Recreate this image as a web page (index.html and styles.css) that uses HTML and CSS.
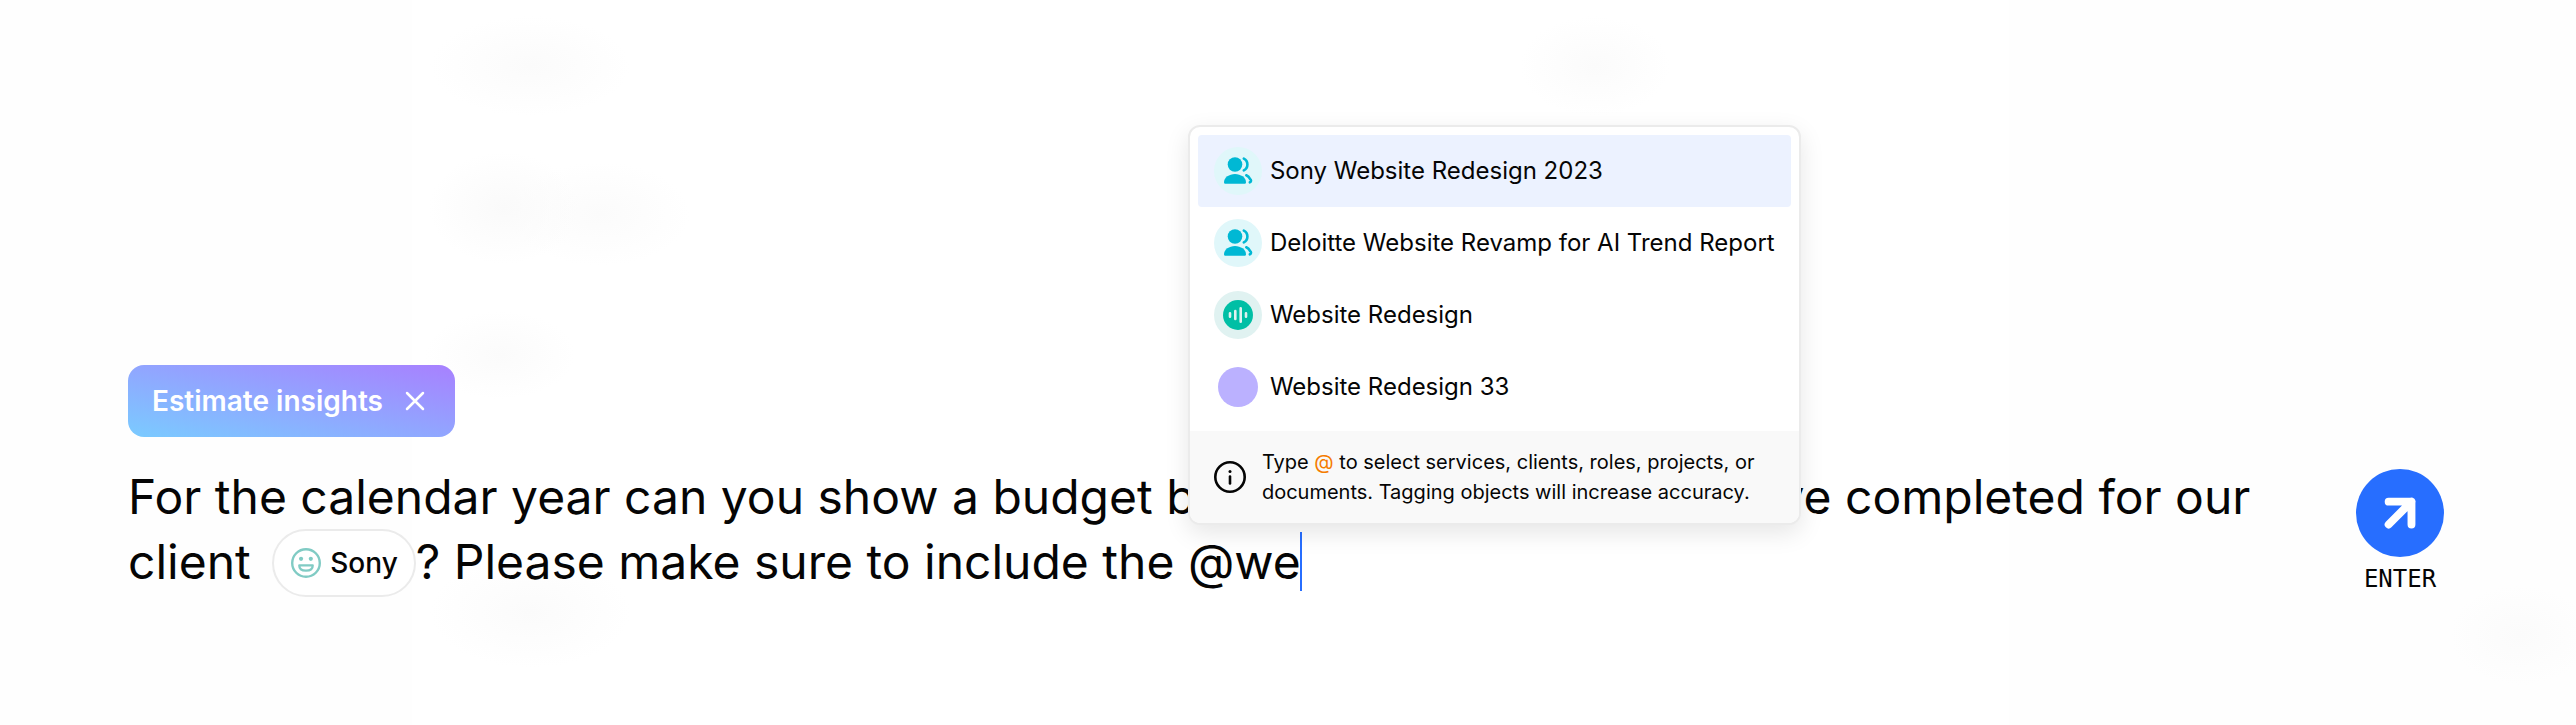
FILE: index.html
```html
<!DOCTYPE html>
<html lang="en">
<head>
<meta charset="utf-8">
<title>Estimate insights</title>
<link rel="stylesheet" href="styles.css">
</head>
<body>
<svg class="sprite" aria-hidden="true">
  <symbol id="people" viewBox="0 0 32 32">
    <circle cx="13" cy="9.5" r="7.3" fill="currentColor"/>
    <path d="M2 27.2c0-4.600 5.200-8.200 11-8.200s11 3.600 11 8.200c0 1-.7 1.600-1.700 1.600H3.700C2.700 28.800 2 28.200 2 27.200Z" fill="currentColor"/>
    <path d="M21.800 3.600c4.800 2.400 4.800 9.400 0 11.800M24.300 20.300c1.800.8 3 2 3.600 3.400m0 0c1.600 1.200 1.500 3-.1 3.600" fill="none" stroke="currentColor" stroke-width="2.600" stroke-linecap="round" stroke-linejoin="round"/>
  </symbol>
</svg>
<main class="page">
  <button class="tag" type="button">
    Estimate insights
    <svg class="tag-close" viewBox="0 0 32 32" aria-hidden="true"><path d="M8 8l16 16M24 8L8 24"/></svg>
  </button>
  <div class="composer">
    <div class="prompt" role="textbox" aria-multiline="true" aria-label="Prompt" tabindex="0">For the calendar year can you show a budget breakdown by projects we've completed for our client <span class="chip"><svg class="chip-icon" viewBox="0 0 24 24" aria-hidden="true"><circle cx="12" cy="12" r="9.200" fill="none" stroke="currentColor" stroke-width="1.600"/><circle cx="8.700" cy="9.200" r="1.400" fill="currentColor"/><circle cx="15.200" cy="9.200" r="1.400" fill="currentColor"/><path d="M7.500 13.600h9c0 2.300-1.900 3.500-4.500 3.500s-4.500-1.200-4.500-3.500Z" fill="none" stroke="currentColor" stroke-width="1.500" stroke-linejoin="round"/></svg>Sony</span>? Please make sure to include the <span class="mention">@we<span class="caret"></span>
      <span class="popup">
        <span class="options" role="listbox" aria-label="Suggestions">
          <button class="option selected" type="button" role="option" aria-selected="true"><span class="avatar cyan"><svg viewBox="0 0 32 32"><use href="#people"/></svg></span>Sony Website Redesign 2023</button>
          <button class="option" type="button" role="option"><span class="avatar cyan"><svg viewBox="0 0 32 32"><use href="#people"/></svg></span>Deloitte Website Revamp for AI Trend Report</button>
          <button class="option" type="button" role="option"><span class="avatar green"><svg viewBox="0 0 32 32"><circle cx="16" cy="16" r="15" fill="currentColor"/><path d="M8 14.300v3.400M13.300 12v8M18.700 9.200v13.600M24 14.300v3.400" fill="none" stroke="#e0f2f0" stroke-width="2.600" stroke-linecap="round"/></svg></span>Website Redesign</button>
          <button class="option" type="button" role="option"><span class="avatar"><span class="dot"></span></span>Website Redesign 33</button>
        </span>
        <span class="hint">
          <svg class="hint-icon" viewBox="0 0 32 32" aria-hidden="true"><circle cx="16" cy="16" r="14.700"/><path d="M16 15.500v7"/><circle class="hint-dot" cx="16" cy="10.500" r="1.500"/></svg>
          <span class="hint-text">Type <span class="at">@</span> to select services, clients, roles, projects, or documents. Tagging objects will increase accuracy.</span>
        </span>
      </span>
    </span></div>
    <div class="submit">
      <button class="send" type="button" aria-labelledby="enter-label"><svg viewBox="0 0 32 32" aria-hidden="true"><path d="M5.300 5.300h21.500v21.500M26.800 5.300L5.300 26.800"/></svg></button>
      <span class="send-label" id="enter-label">ENTER</span>
    </div>
  </div>
</main>
</body>
</html>
```
FILE: styles.css
```css
* { box-sizing: border-box; }

body {
  margin: 0;
  font-family: Inter, "Liberation Sans", sans-serif;
  color: #050505;
  background-color: #fefefe;
}

button {
  border: 0;
  background: none;
  font: inherit;
  color: inherit;
  cursor: pointer;
}

.sprite { position: absolute; width: 0; height: 0; }

.page {
  min-height: 100vh;
  display: flex;
  flex-direction: column;
  justify-content: flex-end;
  align-items: flex-start;
  gap: 27px;
  padding: 128px 132px 131px 128px;
  background-image:
    radial-gradient(100px 50px at 530px 66px, #fbfbfb, transparent),
    radial-gradient(75px 50px at 1595px 66px, #fbfbfb, transparent),
    radial-gradient(75px 56px at 504px 208px, #fafafa, transparent),
    radial-gradient(90px 52px at 600px 214px, #fbfbfb, transparent),
    radial-gradient(75px 44px at 500px 355px, #fbfbfb, transparent),
    radial-gradient(100px 56px at 530px 612px, #fbfbfb, transparent),
    radial-gradient(70px 50px at 2520px 635px, #fbfbfb, transparent),
    linear-gradient(90deg, transparent 16%, #fff 16%, #fff 78%, transparent 78%);
}

.tag {
  display: flex;
  align-items: center;
  gap: 16px;
  height: 72px;
  padding: 0 24px;
  border-radius: 16px;
  background: linear-gradient(to top right, #7acbff, #a880ff);
  color: #fff;
  font-size: 28px;
  font-weight: 600;
}

.tag-close {
  width: 32px;
  height: 32px;
  fill: none;
  stroke: currentColor;
  stroke-width: 2.5;
  stroke-linecap: round;
}

.composer {
  width: 100%;
  display: flex;
  align-items: flex-end;
  gap: 56px;
}

.prompt {
  flex: 1;
  font-size: 48px;
  line-height: 65px;
  outline: none;
}

.chip {
  display: inline-flex;
  align-items: center;
  gap: 6px;
  height: 68px;
  margin: -9px 0 -3px 8px;
  padding: 0 16px 0 14px;
  border: 2px solid #ebebeb;
  border-radius: 34px;
  background: #fff;
  font-size: 28px;
  font-weight: 500;
  line-height: 36px;
  vertical-align: middle;
}

.chip-icon { width: 36px; height: 36px; color: #80cbc4; }

.mention { position: relative; display: inline-block; white-space: nowrap; }

.caret {
  display: inline-block;
  width: 2px;
  height: 59px;
  margin: -2px -1px 0;
  background: #276eff;
  vertical-align: text-bottom;
}

.popup {
  position: absolute;
  left: 0;
  bottom: 100%;
  margin-bottom: 4px;
  width: max-content;
  overflow: hidden;
  border: 2px solid #ebebeb;
  border-radius: 12px;
  background: #fff;
  box-shadow: 0 8px 24px rgba(0, 0, 0, 0.1);
  font-size: 24px;
  line-height: 32px;
}

.options { display: flex; flex-direction: column; padding: 8px; }

.option {
  display: flex;
  align-items: center;
  gap: 8px;
  padding: 12px 16px;
  border-radius: 4px;
  text-align: left;
}

.selected { background: #ecf2ff; }

.avatar {
  display: grid;
  place-items: center;
  width: 48px;
  height: 48px;
  border-radius: 50%;
}

.avatar svg { width: 32px; height: 32px; }
.cyan { background: #e0f7fa; color: #00b8d4; }
.green { background: #e0f2f1; color: #00bfa5; }
.dot { width: 40px; height: 40px; border-radius: 50%; background: #bbb1ff; }

.hint {
  display: flex;
  align-items: center;
  gap: 16px;
  width: 0;
  min-width: 100%;
  padding: 16px 24px;
  background: #f9f9f9;
  font-size: 20px;
  line-height: 30px;
  white-space: normal;
}

.hint-text { flex: 1; }
.at { color: #f57c00; }

.hint-icon {
  flex: none;
  width: 32px;
  height: 32px;
  fill: none;
  stroke: currentColor;
  stroke-width: 2.6;
  stroke-linecap: round;
}

.hint-dot { fill: currentColor; stroke: none; }

.submit {
  display: flex;
  flex-direction: column;
  align-items: center;
  gap: 8px;
}

.send {
  display: grid;
  place-items: center;
  width: 88px;
  height: 88px;
  padding: 0;
  border-radius: 50%;
  background: #276eff;
  color: #fff;
}

.send svg {
  width: 34px;
  height: 34px;
  fill: none;
  stroke: currentColor;
  stroke-width: 7.4;
  stroke-linecap: round;
  stroke-linejoin: round;
}

.send-label {
  font-family: "DejaVu Sans Mono", monospace;
  font-size: 24px;
  line-height: 29px;
}
```
